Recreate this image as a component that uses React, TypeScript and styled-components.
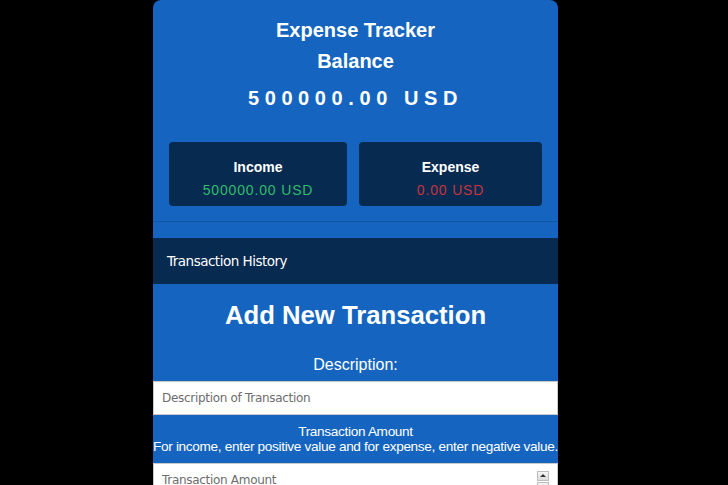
import React from "react";
import styled, { createGlobalStyle } from "styled-components";

const Global = createGlobalStyle`
  html, body { margin: 0; padding: 0; background: #000; height: 100%; }
  body { font-family: "Liberation Sans", Arial, sans-serif; overflow: hidden; }
  * { box-sizing: border-box; }
`;

const Page = styled.div`
  display: flex;
  justify-content: center;
  min-height: 100vh;
  padding-right: 17px;
  background: #000;
`;

const Panel = styled.div`
  width: 405px;
  background: #1565c0;
  border-radius: 8px 8px 0 0;
  color: #fff;
  display: flex;
  flex-direction: column;
`;

const Header = styled.header`
  display: flex;
  flex-direction: column;
  align-items: center;
  padding: 15px 16px 0;
`;

const Title = styled.h1`
  margin: 0;
  font-size: 20px;
  font-weight: 700;
  line-height: 31px;
`;

const BalanceValue = styled.div`
  margin-top: 9px;
  font-size: 20px;
  font-weight: 700;
  letter-spacing: 5.6px;
  line-height: 24px;
`;

const Cards = styled.div`
  display: flex;
  gap: 12px;
  padding: 32px 16px 15px;
  border-bottom: 1px solid #0f55a6;
`;

const Card = styled.div<{ $w: number }>`
  flex: 0 0 ${(p) => p.$w}px;
  height: 64px;
  background: #072a50;
  border-radius: 4px;
  display: flex;
  flex-direction: column;
  align-items: center;
  justify-content: center;
  gap: 7px;
  padding-top: 8px;
`;

const CardLabel = styled.div`
  font-size: 14px;
  font-weight: 700;
`;

const CardValue = styled.div<{ $tone: "in" | "out" }>`
  font-size: 14px;
  letter-spacing: 0.85px;
  color: ${(p) => (p.$tone === "in" ? "#2ebd6b" : "#c8343f")};
`;

const HistoryBar = styled.div`
  margin-top: 16px;
  height: 46px;
  background: #072a50;
  display: flex;
  align-items: center;
  padding: 0 14px;
  font-family: "DejaVu Sans", Tahoma, sans-serif;
  font-size: 13.5px;
  letter-spacing: -0.5px;
`;

const Form = styled.form`
  display: flex;
  flex-direction: column;
  align-items: center;
`;

const FormTitle = styled.h2`
  margin: 15px 0 0;
  font-size: 25.7px;
  font-weight: 700;
  line-height: 32px;
`;

const Label = styled.label`
  margin-top: 24px;
  font-size: 16px;
  line-height: 20px;
  text-align: center;
`;

const SubLabel = styled.label`
  margin-top: 9px;
  font-size: 13.6px;
  line-height: 15px;
  letter-spacing: -0.32px;
  text-align: center;
  white-space: nowrap;
`;

const Field = styled.div<{ $gap: number }>`
  position: relative;
  width: 100%;
  margin-top: ${(p) => p.$gap}px;
`;

const Input = styled.input`
  display: block;
  width: 100%;
  height: 34px;
  border: 1px solid #c9c9c9;
  background: #fff;
  padding: 0 8px;
  font-family: "DejaVu Sans", Tahoma, sans-serif;
  font-size: 12px;
  letter-spacing: -0.3px;
  color: #333;
  outline: none;
  -moz-appearance: textfield;
  &::placeholder { color: #6d6d6d; }
  &::-webkit-inner-spin-button,
  &::-webkit-outer-spin-button { -webkit-appearance: none; margin: 0; }
`;

const Spinner = styled.div`
  position: absolute;
  right: 9px;
  top: 8px;
  width: 12px;
  height: 20px;
  display: flex;
  flex-direction: column;
  gap: 1px;
  pointer-events: none;
`;

const SpinHalf = styled.div`
  flex: 1;
  background: linear-gradient(#f4f4f4, #dcdcdc);
  border: 1px solid #bdbdbd;
  display: flex;
  align-items: center;
  justify-content: center;
`;

const Arrow = styled.span<{ $down?: boolean }>`
  width: 0;
  height: 0;
  border-left: 3px solid transparent;
  border-right: 3px solid transparent;
  ${(p) => (p.$down ? "border-top: 3px solid #333;" : "border-bottom: 3px solid #333;")}
`;

export default function App() {
  return (
    <>
      <Global />
      <Page>
        <Panel>
          <Header>
            <Title>Expense Tracker</Title>
            <Title>Balance</Title>
            <BalanceValue>500000.00 USD</BalanceValue>
          </Header>
          <Cards>
            <Card $w={178}>
              <CardLabel>Income</CardLabel>
              <CardValue $tone="in">500000.00 USD</CardValue>
            </Card>
            <Card $w={183}>
              <CardLabel>Expense</CardLabel>
              <CardValue $tone="out">0.00 USD</CardValue>
            </Card>
          </Cards>
          <HistoryBar>Transaction History</HistoryBar>
          <Form onSubmit={(e) => e.preventDefault()}>
            <FormTitle>Add New Transaction</FormTitle>
            <Label htmlFor="desc">Description:</Label>
            <Field $gap={6}>
              <Input id="desc" type="text" placeholder="Description of Transaction" />
            </Field>
            <SubLabel htmlFor="amt">
              Transaction Amount
              <br />
              For income, enter positive value and for expense, enter negative value.
            </SubLabel>
            <Field $gap={9}>
              <Input id="amt" type="number" placeholder="Transaction Amount" />
              <Spinner>
                <SpinHalf><Arrow /></SpinHalf>
                <SpinHalf><Arrow $down /></SpinHalf>
              </Spinner>
            </Field>
          </Form>
        </Panel>
      </Page>
    </>
  );
}
